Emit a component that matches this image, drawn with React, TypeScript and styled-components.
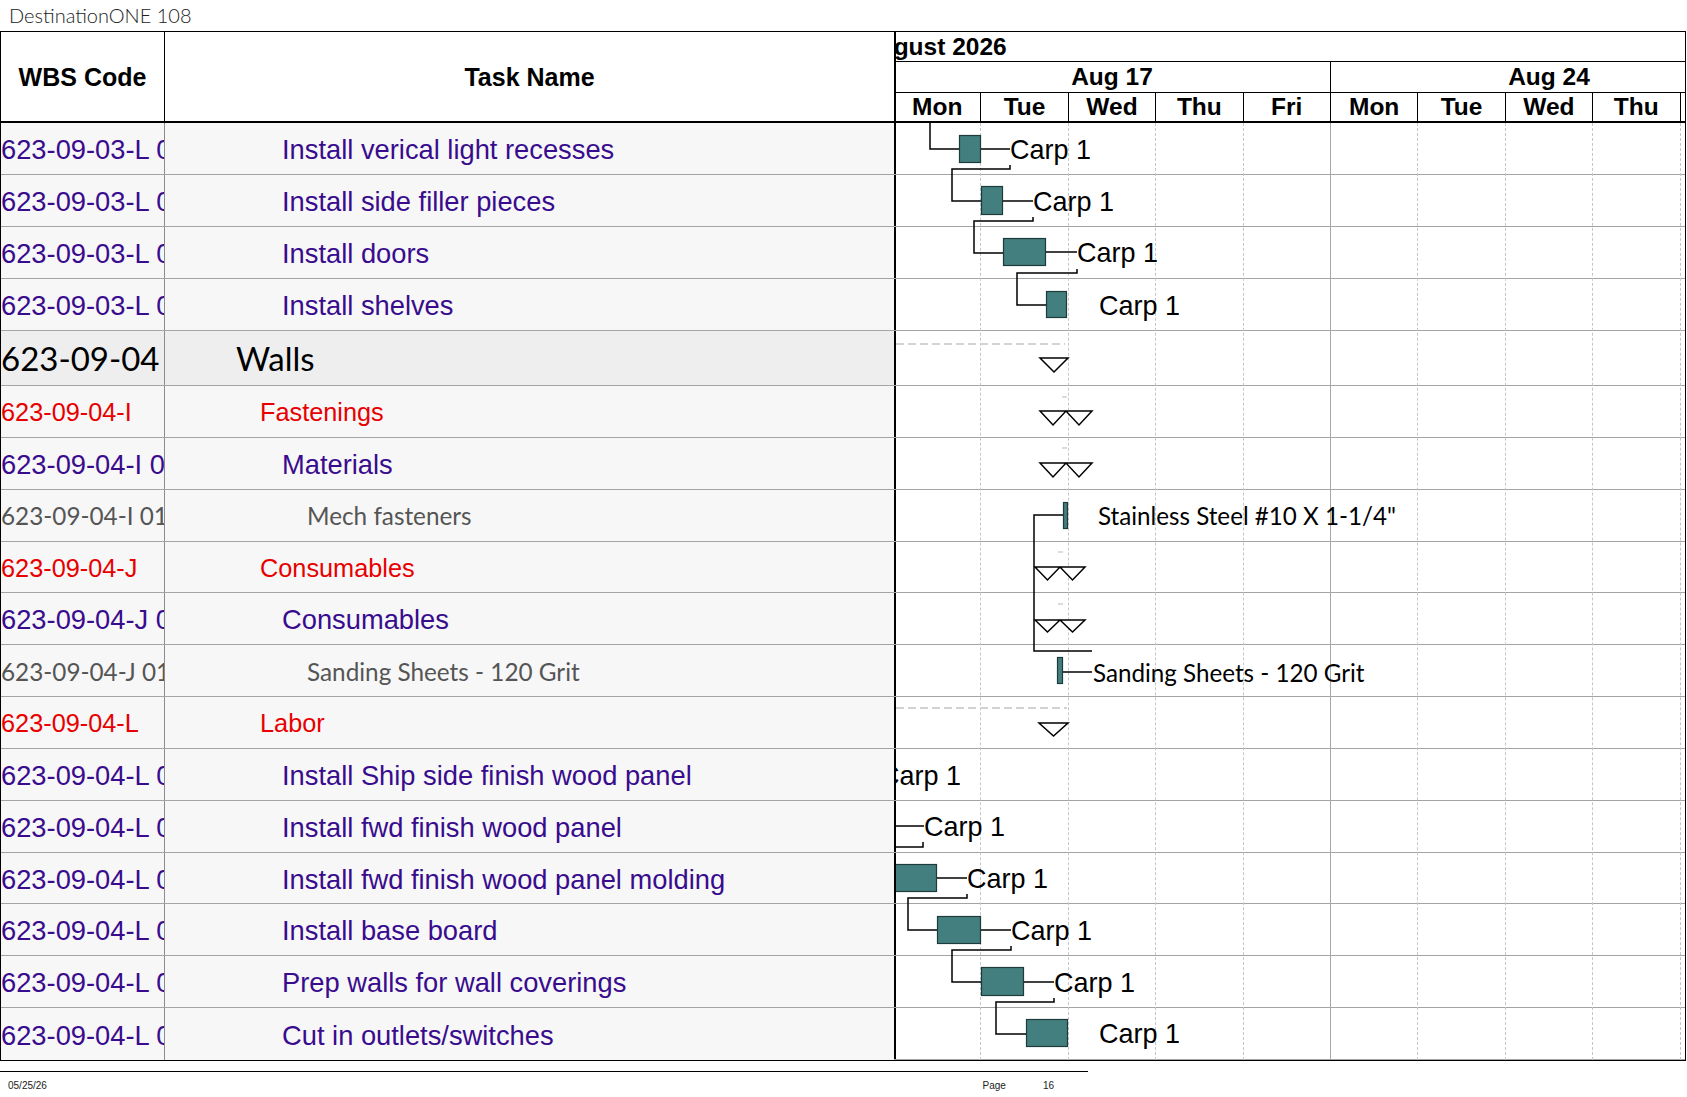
import React from "react"
import styled, { createGlobalStyle } from "styled-components"

const GlobalStyle = createGlobalStyle`
	html, body {
		margin: 0;
		padding: 0;
		background: #fff;
	}
	body {
		font-family: "Liberation Sans", Arial, sans-serif;
		color: #000;
	}
`

const DAY_W = 87.4
const CHART_X = 896
const CHART_Y = 123
const TEAL = "#437f7e"
const PURPLE = "#390c8e"
const RED = "#e80000"

type Kind = "task" | "summary" | "group" | "resource"

type Row = { wbs: string; name: string; kind: Kind; height: number }

const rows: Row[] = [
	{ wbs: "623-09-03-L 01", name: "Install verical light recesses", kind: "task", height: 52 },
	{ wbs: "623-09-03-L 02", name: "Install side filler pieces", kind: "task", height: 52 },
	{ wbs: "623-09-03-L 03", name: "Install doors", kind: "task", height: 52 },
	{ wbs: "623-09-03-L 04", name: "Install shelves", kind: "task", height: 52 },
	{ wbs: "623-09-04", name: "Walls", kind: "summary", height: 55 },
	{ wbs: "623-09-04-I", name: "Fastenings", kind: "group", height: 51.85 },
	{ wbs: "623-09-04-I 01", name: "Materials", kind: "task", height: 51.85 },
	{ wbs: "623-09-04-I 01 01", name: "Mech fasteners", kind: "resource", height: 51.85 },
	{ wbs: "623-09-04-J", name: "Consumables", kind: "group", height: 51.85 },
	{ wbs: "623-09-04-J 01", name: "Consumables", kind: "task", height: 51.85 },
	{ wbs: "623-09-04-J 01 01", name: "Sanding Sheets - 120 Grit", kind: "resource", height: 51.85 },
	{ wbs: "623-09-04-L", name: "Labor", kind: "group", height: 51.85 },
	{ wbs: "623-09-04-L 01", name: "Install Ship side finish wood panel", kind: "task", height: 51.85 },
	{ wbs: "623-09-04-L 02", name: "Install fwd finish wood panel", kind: "task", height: 51.85 },
	{ wbs: "623-09-04-L 03", name: "Install fwd finish wood panel molding", kind: "task", height: 51.85 },
	{ wbs: "623-09-04-L 04", name: "Install base board", kind: "task", height: 51.85 },
	{ wbs: "623-09-04-L 05", name: "Prep walls for wall coverings", kind: "task", height: 51.85 },
	{ wbs: "623-09-04-L 06", name: "Cut in outlets/switches", kind: "task", height: 51.85 },
]

const days = ["Mon", "Tue", "Wed", "Thu", "Fri", "Mon", "Tue", "Wed", "Thu", "Fri"]

const Page = styled.div`
	width: 1687px;
	height: 1097px;
	overflow: hidden;
`

const Title = styled.div`
	height: 31px;
	padding-left: 9px;
	box-sizing: border-box;
	font-family: Lato, "Open Sans", sans-serif;
	font-size: 20px;
	font-weight: 300;
	line-height: 30px;
	color: #222;
`

const Sheet = styled.div`
	width: 1686px;
	border: 1px solid #000;
	box-sizing: border-box;
`

const Header = styled.div`
	display: grid;
	grid-template-columns: 164px 729px 791px;
	height: 91px;
	border-bottom: 2px solid #000;
	box-sizing: border-box;
`

const HeadCell = styled.div<{ $divider?: boolean }>`
	display: flex;
	align-items: center;
	justify-content: center;
	font-weight: bold;
	font-size: 25px;
	padding-top: 2px;
	border-right: ${(p) => (p.$divider ? "1px solid #000" : "none")};
`

const Timescale = styled.div`
	display: flex;
	flex-direction: column;
	overflow: hidden;
	box-shadow: inset 2px 0 0 #000;
	font-weight: bold;
	font-size: 24.5px;
`

const MonthRow = styled.div`
	height: 30px;
	border-bottom: 1px solid #000;
	box-sizing: border-box;
	line-height: 29px;
	white-space: nowrap;
	padding-left: 2px;
`

const MonthLabel = styled.span`
	margin-left: -35px;
`

const ScaleRow = styled.div<{ $h: number }>`
	display: flex;
	height: ${(p) => p.$h}px;
	flex-shrink: 0;
`

const WeekRow = styled(ScaleRow)`
	border-bottom: 1px solid #000;
	box-sizing: border-box;
`

const ScaleCell = styled.div<{ $w: number }>`
	width: ${(p) => p.$w}px;
	flex-shrink: 0;
	display: flex;
	align-items: center;
	justify-content: center;
	border-right: 1px solid #000;
	box-sizing: border-box;
`

const Body = styled.div`
	display: grid;
	grid-template-columns: 893px 791px;
`

const LeftRows = styled.div`
	display: flex;
	flex-direction: column;
`

const TableRow = styled.div<{ $h: number; $summary: boolean }>`
	display: grid;
	grid-template-columns: 164px 729px;
	height: ${(p) => p.$h}px;
	box-sizing: border-box;
	border-bottom: 1px solid #a4a4a4;
	background: ${(p) => (p.$summary ? "#eeeeee" : "#f7f7f7")};
	&:last-child {
		border-bottom: none;
	}
`

const kindColor: Record<Kind, string> = {
	task: PURPLE,
	summary: "#000",
	group: RED,
	resource: "#555",
}

const kindFont: Record<Kind, string> = {
	task: `27.3px "Liberation Sans", Arial, sans-serif`,
	summary: `33px Lato, "Open Sans", sans-serif`,
	group: `25.3px "Liberation Sans", Arial, sans-serif`,
	resource: `24.3px Lato, "Open Sans", sans-serif`,
}

const indent: Record<Kind, number> = {
	summary: 71,
	group: 95,
	task: 117,
	resource: 142,
}

const nudge: Record<Kind, number> = {
	summary: 0,
	group: 3,
	task: 3,
	resource: 1,
}

const WbsCell = styled.div<{ $kind: Kind }>`
	display: flex;
	align-items: center;
	overflow: hidden;
	white-space: nowrap;
	padding-top: ${(p) => nudge[p.$kind]}px;
	border-right: 1px solid #8c8c8c;
	color: ${(p) => kindColor[p.$kind]};
	font: ${(p) => kindFont[p.$kind]};
`

const NameCell = styled.div<{ $kind: Kind }>`
	display: flex;
	align-items: center;
	overflow: hidden;
	white-space: nowrap;
	padding-left: ${(p) => indent[p.$kind]}px;
	padding-top: ${(p) => nudge[p.$kind]}px;
	color: ${(p) => kindColor[p.$kind]};
	font: ${(p) => kindFont[p.$kind]};
`

const GanttPane = styled.div`
	position: relative;
	overflow: hidden;
	background: #fff;
	box-shadow: inset 2px 0 0 #000;
`

const GanttRow = styled.div<{ $h: number }>`
	height: ${(p) => p.$h}px;
	box-sizing: border-box;
	border-bottom: 1px solid #a4a4a4;
	&:last-child {
		border-bottom: none;
	}
`

const DayLines = styled.div`
	position: absolute;
	inset: 0;
	display: flex;
	pointer-events: none;
`

const DayColumn = styled.div<{ $weekEnd: boolean }>`
	width: ${DAY_W}px;
	flex-shrink: 0;
	box-sizing: border-box;
	border-right: 1px ${(p) => (p.$weekEnd ? "solid #a8a8a8" : "dashed #c6c6c6")};
`

const Chart = styled.svg`
	position: absolute;
	left: 2px;
	top: 0;
	pointer-events: none;
`

const Footer = styled.div`
	width: 1088px;
	margin-top: 10px;
	border-top: 1px solid #000;
	display: flex;
	align-items: center;
	height: 27px;
	font-family: "Liberation Sans Narrow", "Liberation Sans", Arial, sans-serif;
	font-size: 10px;
	color: #222;
`

const FooterDate = styled.span`
	padding-left: 8px;
	flex: 1;
`

const FooterItem = styled.span<{ $gap: number }>`
	margin-right: ${(p) => p.$gap}px;
`

// bars: x1, x2, y1, y2 in page coordinates
const bars: [number, number, number, number][] = [
	[959, 981, 135, 163],
	[981, 1003, 186, 215],
	[1003, 1046, 238, 266],
	[1046, 1067, 291, 318],
	[1063, 1068, 502, 529],
	[1057, 1063, 657, 684],
	[870, 937, 864, 892],
	[937, 981, 916, 944],
	[981, 1024, 967, 996],
	[1026, 1068, 1019, 1047],
]

const links: [number, number][][] = [
	[[930, 123], [930, 149], [959, 149]],
	[[981, 149], [1010, 149]],
	[[1010, 165], [1010, 169], [952, 169], [952, 201], [981, 201]],
	[[1003, 201], [1033, 201]],
	[[1033, 217], [1033, 221], [974, 221], [974, 253], [1003, 253]],
	[[1046, 252], [1077, 252]],
	[[1077, 269], [1077, 273], [1017, 273], [1017, 305], [1046, 305]],
	[[1063, 515], [1034, 515], [1034, 651], [1092, 651]],
	[[1063, 672], [1092, 672]],
	[[880, 826], [924, 826]],
	[[923, 842], [923, 847], [880, 847]],
	[[937, 878], [967, 878]],
	[[967, 894], [967, 898], [908, 898], [908, 930], [937, 930]],
	[[981, 930], [1011, 930]],
	[[1011, 946], [1011, 950], [952, 950], [952, 982], [981, 982]],
	[[1024, 982], [1054, 982]],
	[[1054, 998], [1054, 1002], [996, 1002], [996, 1034], [1026, 1034]],
]

const carpLabels: [number, number][] = [
	[1010, 150],
	[1033, 202],
	[1077, 253],
	[1099, 306],
	[880, 776],
	[924, 827],
	[967, 879],
	[1011, 931],
	[1054, 983],
	[1099, 1034],
]

// double milestone: x0, x1, top, bottom
const doubles: [number, number, number, number][] = [
	[1040, 1092, 411, 425],
	[1040, 1092, 463, 477],
	[1035, 1085, 567, 580],
	[1035, 1085, 620, 632],
]

const ticks: [number, number][] = [
	[1062, 397],
	[1062, 448],
	[1058, 552],
	[1058, 604],
]

const pts = (p: [number, number][]) => p.map(([x, y]) => `${x},${y}`).join(" ")

const GanttDrawing = ({ height }: { height: number }) => (
	<Chart width={789} height={height} viewBox={`0 0 789 ${height}`}>
		<g transform={`translate(${-CHART_X},${-CHART_Y})`}>
			<line x1={896} x2={1065} y1={344} y2={344} stroke="#d2d2d2" strokeWidth={2} strokeDasharray="8 4" />
			<line x1={896} x2={1067} y1={708} y2={708} stroke="#d2d2d2" strokeWidth={2} strokeDasharray="8 4" />
			{ticks.map(([x, y], i) => (
				<line key={i} x1={x} x2={x + 5} y1={y} y2={y} stroke="#d0d0d0" strokeWidth={1.5} />
			))}
			{links.map((l, i) => (
				<polyline key={i} points={pts(l)} fill="none" stroke="#000" strokeWidth={1.5} />
			))}
			{bars.map(([x1, x2, y1, y2], i) => (
				<rect
					key={i}
					x={x1 + 0.5}
					y={y1 + 0.5}
					width={x2 - x1 - 1}
					height={y2 - y1 - 1}
					fill={TEAL}
					stroke="#1d3b3b"
					strokeWidth={1.2}
				/>
			))}
			<polygon points="1040,358 1068,358 1054,372" fill="#fff" stroke="#000" strokeWidth={1.5} />
			<polygon points="1039,723 1068,723 1053.5,736" fill="#fff" stroke="#000" strokeWidth={1.5} />
			{doubles.map(([x0, x1, t, b], i) => {
				const q = (x1 - x0) / 4
				return (
					<polygon
						key={i}
						points={`${x0},${t} ${x0 + q},${b} ${x0 + 2 * q},${t} ${x0 + 3 * q},${b} ${x1},${t}`}
						fill="#fff"
						stroke="#000"
						strokeWidth={1.5}
					/>
				)
			})}
			<g fontFamily='"Liberation Sans", Arial, sans-serif' fontSize={27} fill="#000">
				{carpLabels.map(([x, y], i) => (
					<text key={i} x={x} y={y} dominantBaseline="central">
						Carp 1
					</text>
				))}
			</g>
			<g fontFamily='Lato, "Open Sans", sans-serif' fontSize={24.2} fill="#000">
				<text x={1098} y={516} dominantBaseline="central">
					Stainless Steel #10 X 1-1/4"
				</text>
				<text x={1093} y={673} dominantBaseline="central">
					Sanding Sheets - 120 Grit
				</text>
			</g>
		</g>
	</Chart>
)

export default function App() {
	const bodyHeight = rows.reduce((s, r) => s + r.height, 0)
	return (
		<Page>
			<GlobalStyle />
			<Title>DestinationONE 108</Title>
			<Sheet>
				<Header>
					<HeadCell $divider>WBS Code</HeadCell>
					<HeadCell>Task Name</HeadCell>
					<Timescale>
						<MonthRow>
							<MonthLabel>August 2026</MonthLabel>
						</MonthRow>
						<WeekRow $h={31}>
							<ScaleCell $w={DAY_W * 5}>Aug 17</ScaleCell>
							<ScaleCell $w={DAY_W * 5}>Aug 24</ScaleCell>
						</WeekRow>
						<ScaleRow $h={28}>
							{days.map((d, i) => (
								<ScaleCell key={i} $w={DAY_W}>
									{d}
								</ScaleCell>
							))}
						</ScaleRow>
					</Timescale>
				</Header>
				<Body>
					<LeftRows>
						{rows.map((r, i) => (
							<TableRow key={i} $h={r.height} $summary={r.kind === "summary"}>
								<WbsCell $kind={r.kind}>{r.wbs}</WbsCell>
								<NameCell $kind={r.kind}>{r.name}</NameCell>
							</TableRow>
						))}
					</LeftRows>
					<GanttPane>
						{rows.map((r, i) => (
							<GanttRow key={i} $h={r.height} />
						))}
						<DayLines>
							{days.map((_, i) => (
								<DayColumn key={i} $weekEnd={i === 4} />
							))}
						</DayLines>
						<GanttDrawing height={bodyHeight} />
					</GanttPane>
				</Body>
			</Sheet>
			<Footer>
				<FooterDate>05/25/26</FooterDate>
				<FooterItem $gap={37}>Page</FooterItem>
				<FooterItem $gap={34}>16</FooterItem>
			</Footer>
		</Page>
	)
}
